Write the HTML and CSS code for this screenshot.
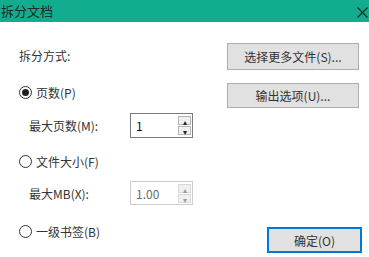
FILE: index.html
```html
<!DOCTYPE html>
<html lang="zh-CN">
<head>
    <meta charset="UTF-8">
    <title>拆分文档</title>
    <link rel="stylesheet" href="styles.css">
</head>
<body>
    <div class="window">
        <div class="titlebar">
            <span class="title">拆分文档</span>
            <span class="close">
                <svg width="11" height="11" viewBox="0 0 11 11"><path d="M0.5 0.5 L10.5 10.5 M10.5 0.5 L0.5 10.5" stroke="#1d2b26" stroke-width="1.2"/></svg>
            </span>
        </div>

        <div class="content">
            <div class="left">
                <div class="row row-label">拆分方式:</div>
                <label class="row row-radio">
                    <span class="radio checked"></span>页数(P)
                </label>
                <div class="row row-field">
                    <span class="field-label">最大页数(M):</span>
                    <div class="spin">
                        <span class="spin-value">1</span>
                        <span class="spin-btns">
                            <span class="spin-btn">&#9652;</span>
                            <span class="spin-btn">&#9662;</span>
                        </span>
                    </div>
                </div>
                <label class="row row-radio row-size">
                    <span class="radio"></span>文件大小(F)
                </label>
                <div class="row row-field row-mb">
                    <span class="field-label">最大MB(X):</span>
                    <div class="spin disabled">
                        <span class="spin-value">1.00</span>
                        <span class="spin-btns">
                            <span class="spin-btn">&#9652;</span>
                            <span class="spin-btn">&#9662;</span>
                        </span>
                    </div>
                </div>
                <label class="row row-radio row-bookmark">
                    <span class="radio"></span>一级书签(B)
                </label>
            </div>

            <div class="right">
                <button class="btn btn-files">选择更多文件(S)...</button>
                <button class="btn btn-output">输出选项(U)...</button>
                <button class="btn btn-ok">确定(O)</button>
            </div>
        </div>
    </div>
</body>
</html>
```

FILE: styles.css
```css
body {
    margin: 0;
    padding: 0;
    background-color: #ffffff;
    font-family: "Noto Sans CJK SC", "Noto Sans", sans-serif;
    font-size: 12px;
    color: #333333;
}

.window {
    width: 369px;
    height: 257px;
    display: flex;
    flex-direction: column;
    overflow: hidden;
}

.titlebar {
    height: 22px;
    background-color: #12ad8e;
    display: flex;
    align-items: center;
    justify-content: space-between;
    flex-shrink: 0;
}

.title {
    font-size: 13px;
    color: #1d2b26;
    padding-left: 1px;
    line-height: 22px;
}

.close {
    display: flex;
    align-items: center;
    padding-right: 1px;
    margin-top: 2px;
}

.content {
    flex: 1;
    display: flex;
    justify-content: space-between;
}

.left {
    display: flex;
    flex-direction: column;
    padding-left: 19px;
}

.row {
    display: flex;
    align-items: center;
    height: 24px;
}

.row-label {
    margin-top: 21px;
}

.row-radio {
    margin-top: 13px;
}

.row-field {
    margin-top: 10px;
    padding-left: 10px;
    height: 23px;
}

.row-size {
    margin-top: 12px;
}

.row-mb {
    margin-top: 9px;
    height: 22px;
}

.row-bookmark {
    margin-top: 15px;
}

.radio {
    width: 11px;
    height: 11px;
    border: 1px solid #333333;
    border-radius: 50%;
    margin-right: 4px;
    display: flex;
    align-items: center;
    justify-content: center;
    box-sizing: content-box;
}

.radio.checked::after {
    content: "";
    width: 7px;
    height: 7px;
    border-radius: 50%;
    background-color: #222222;
}

.field-label {
    width: 101px;
}

.spin {
    width: 61px;
    height: 100%;
    border: 1px solid #7a7a7a;
    display: flex;
    align-items: center;
    justify-content: space-between;
    color: #111111;
}

.spin-value {
    padding-left: 5px;
    font-size: 12px;
}

.spin-btns {
    display: flex;
    flex-direction: column;
    gap: 1px;
    padding-right: 1px;
}

.spin-btn {
    width: 13px;
    height: 9px;
    border: 1px solid #b5b5b5;
    background-color: #f0f0f0;
    font-size: 8px;
    line-height: 9px;
    text-align: center;
    color: #222222;
    box-sizing: border-box;
}

.spin.disabled {
    border-color: #cccccc;
    color: #6d6d6d;
}

.spin.disabled .spin-btn {
    border-color: #d8d8d8;
    color: #9a9a9a;
}

.right {
    display: flex;
    flex-direction: column;
    align-items: flex-end;
    padding-right: 10px;
    padding-top: 21px;
    padding-bottom: 4px;
}

.btn {
    font-family: "Noto Sans CJK SC", "Noto Sans", sans-serif;
    font-size: 12px;
    color: #333333;
    background-color: #e1e1e1;
    border: 1px solid #adadad;
    padding: 0;
    cursor: pointer;
}

.btn-files {
    width: 132px;
    height: 27px;
}

.btn-output {
    width: 132px;
    height: 25px;
    margin-top: 13px;
}

.btn-ok {
    width: 95px;
    height: 26px;
    margin-top: auto;
    margin-right: -3px;
    border: 2px solid #0078d7;
}
```
